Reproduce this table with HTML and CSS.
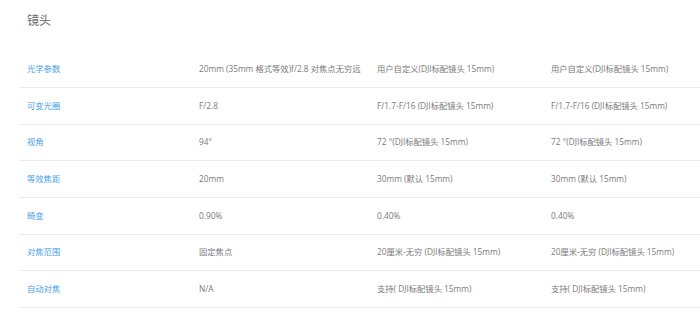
FILE: index.html
```html
<!DOCTYPE html>
<html lang="zh">
<head>
<meta charset="utf-8">
<link rel="stylesheet" href="styles.css">
</head>
<body>
<div class="spec">
  <div class="title">镜头</div>
  <div class="table">
    <div class="row"><div class="label">光学参数</div><div class="cell">20mm (35mm 格式等效)f/2.8 对焦点无穷远</div><div class="cell">用户自定义(DJI标配镜头 15mm)</div><div class="cell">用户自定义(DJI标配镜头 15mm)</div></div>
    <div class="row"><div class="label">可变光圈</div><div class="cell">F/2.8</div><div class="cell">F/1.7-F/16 (DJI标配镜头 15mm)</div><div class="cell">F/1.7-F/16 (DJI标配镜头 15mm)</div></div>
    <div class="row"><div class="label">视角</div><div class="cell">94°</div><div class="cell">72 °(DJI标配镜头 15mm)</div><div class="cell">72 °(DJI标配镜头 15mm)</div></div>
    <div class="row"><div class="label">等效焦距</div><div class="cell">20mm</div><div class="cell">30mm (默认 15mm)</div><div class="cell">30mm (默认 15mm)</div></div>
    <div class="row"><div class="label">畸变</div><div class="cell">0.90%</div><div class="cell">0.40%</div><div class="cell">0.40%</div></div>
    <div class="row"><div class="label">对焦范围</div><div class="cell">固定焦点</div><div class="cell">20厘米-无穷 (DJI标配镜头 15mm)</div><div class="cell">20厘米-无穷 (DJI标配镜头 15mm)</div></div>
    <div class="row"><div class="label">自动对焦</div><div class="cell">N/A</div><div class="cell">支持( DJI标配镜头 15mm)</div><div class="cell">支持( DJI标配镜头 15mm)</div></div>
  </div>
</div>
</body>
</html>
```

FILE: styles.css
```css
html, body {
  margin: 0;
  padding: 0;
  background: #ffffff;
  overflow: hidden;
}
body {
  font-family: "Open Sans", "Noto Sans CJK SC", sans-serif;
  color: #7a7a7a;
}
.spec {
  padding-left: 19px;
}
.title {
  height: 51.33px;
  box-sizing: border-box;
  padding: 13px 0 0 8px;
  font-size: 12px;
  line-height: 16px;
  color: #666666;
}
.row {
  display: grid;
  grid-template-columns: 172px 178px 174px 1fr;
  align-items: center;
  height: 36.667px;
  box-sizing: border-box;
  border-bottom: 1px solid #ebebeb;
  font-size: 8.3px;
  line-height: 12px;
}
.label, .cell {
  padding-left: 8px;
  white-space: nowrap;
}
.label {
  color: #4aa0ea;
}
```
